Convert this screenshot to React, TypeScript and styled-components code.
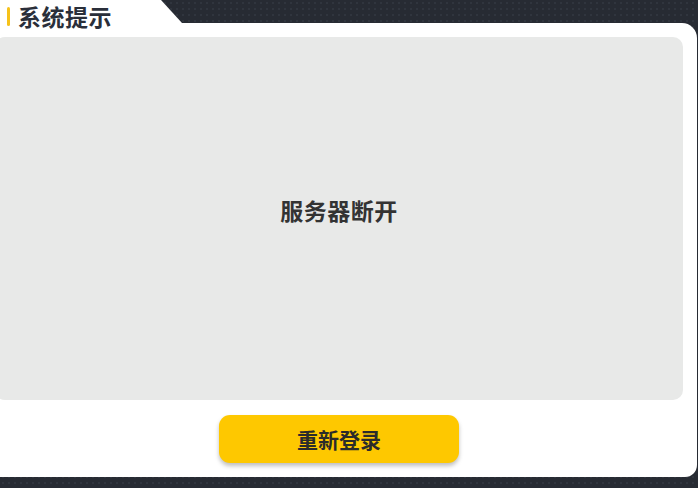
import styled, { createGlobalStyle } from "styled-components"

const GlobalStyle = createGlobalStyle`
  html, body {
    margin: 0;
    padding: 0;
    background-color: #272b33;
    background-image: radial-gradient(circle, #30353e 1.2px, transparent 1.4px);
    background-size: 6px 6px;
    font-family: "Noto Sans CJK SC", "Noto Sans", sans-serif;
    overflow: hidden;
  }
`

const Frame = styled.div`
  width: 698px;
  height: 488px;
  display: flex;
  flex-direction: column;
`

const Header = styled.div`
  position: relative;
  height: 23px;
  width: 182px;
  flex-shrink: 0;

  &::before {
    content: "";
    position: absolute;
    inset: 0;
    background: #ffffff;
    clip-path: polygon(0 0, 161px 0, 182px 23px, 0 23px);
  }
`

const Title = styled.div`
  position: relative;
  z-index: 1;
  display: flex;
  align-items: center;
  gap: 8px;
  padding: 3px 0 0 7px;
  font-size: 23px;
  font-weight: 700;
  color: #2a2f3a;
  line-height: 26px;
  letter-spacing: 0.5px;
`

const Accent = styled.span`
  width: 3px;
  height: 19px;
  border-radius: 2px;
  background: #f6c21a;
`

const Body = styled.div`
  width: 697px;
  height: 454px;
  background: #ffffff;
  border-radius: 0 15px 12px 0;
  display: flex;
  flex-direction: column;
  padding: 14px 0 0 0;
  box-sizing: border-box;
`

const Content = styled.div`
  width: 688px;
  margin-left: -5px;
  display: flex;
  flex-direction: column;
  align-items: center;
`

const Panel = styled.div`
  width: 100%;
  height: 363px;
  background: #e8e9e8;
  border-radius: 10px;
  display: flex;
  align-items: center;
  justify-content: center;
  padding-bottom: 18px;
  box-sizing: border-box;
`

const Message = styled.div`
  font-size: 23px;
  font-weight: 700;
  color: #333333;
  letter-spacing: 0.5px;
`

const LoginButton = styled.button`
  margin-top: 15px;
  width: 240px;
  height: 48px;
  border: none;
  border-radius: 11px;
  background: #fec800;
  box-shadow: 0 3px 4px rgba(0, 0, 0, 0.25);
  font-family: "Noto Sans CJK SC", "Noto Sans", sans-serif;
  font-size: 21px;
  font-weight: 700;
  color: #2b2b2b;
  cursor: pointer;
`

export default function App() {
  return (
    <>
      <GlobalStyle />
      <Frame>
        <Header>
          <Title>
            <Accent />
            系统提示
          </Title>
        </Header>
        <Body>
          <Content>
            <Panel>
              <Message>服务器断开</Message>
            </Panel>
            <LoginButton>重新登录</LoginButton>
          </Content>
        </Body>
      </Frame>
    </>
  )
}
